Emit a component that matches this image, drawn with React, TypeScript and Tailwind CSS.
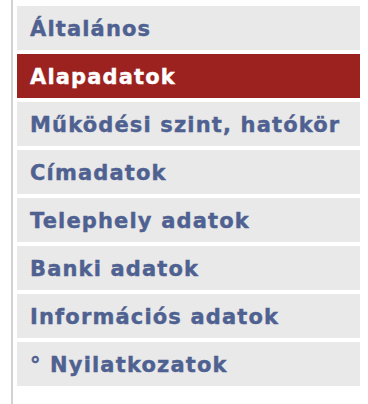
import React from 'react';

const items = [
  'Általános',
  'Alapadatok',
  'Működési szint, hatókör',
  'Címadatok',
  'Telephely adatok',
  'Banki adatok',
  'Információs adatok',
  '° Nyilatkozatok',
];

const active = 1;

export default function App() {
  return (
    <div className="h-[404px] w-[368px] bg-white pl-[11px] font-['DejaVu_Sans',Verdana,sans-serif]">
      <div className="h-full border-l-2 border-[#d2d2d2] pl-[4px] pt-[6px]">
        <ul className="flex flex-col gap-[4px]">
          {items.map((label, i) => (
            <li
              key={label}
              className={
                i === active
                  ? 'flex h-[44px] w-[343px] items-center bg-[#9c2220] pl-[13px] pt-[3px] text-[21px] font-bold tracking-[1.15px] text-white [-webkit-text-stroke:0.4px_#ffffff]'
                  : 'flex h-[44px] w-[343px] items-center bg-[#e9e9e9] pl-[13px] pt-[3px] text-[21px] font-bold tracking-[1.15px] text-[#4f6190] [-webkit-text-stroke:0.4px_#4f6190]'
              }
            >
              {label}
            </li>
          ))}
        </ul>
      </div>
    </div>
  );
}
